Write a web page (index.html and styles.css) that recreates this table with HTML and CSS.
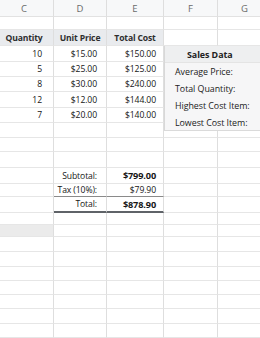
FILE: index.html
```html
<!DOCTYPE html>
<html>
<head>
<meta charset="utf-8">
<link rel="stylesheet" href="styles.css">
</head>
<body>
<div class="sheet">
  <div class="c hd">C</div><div class="c hd">D</div><div class="c hd">E</div><div class="c hd">F</div><div class="c hd">G</div>
  <div class="c"></div><div class="c"></div><div class="c"></div><div class="c"></div><div class="c"></div>
  <div class="c th">Quantity</div><div class="c th">Unit Price</div><div class="c th">Total Cost</div><div class="c"></div><div class="c"></div>

  <div class="panel">
    <div class="prow ptitle">Sales Data</div>
    <div class="prow">Average Price:</div>
    <div class="prow">Total Quantity:</div>
    <div class="prow">Highest Cost Item:</div>
    <div class="prow">Lowest Cost Item:</div>
  </div>

  <div class="c n pc">10</div><div class="c n pd">$15.00</div><div class="c n pe">$150.00</div>
  <div class="c n pc">5</div><div class="c n pd">$25.00</div><div class="c n pe">$125.00</div>
  <div class="c n pc">8</div><div class="c n pd">$30.00</div><div class="c n pe">$240.00</div>
  <div class="c n pc">12</div><div class="c n pd">$12.00</div><div class="c n pe">$144.00</div>
  <div class="c n pc">7</div><div class="c n pd">$20.00</div><div class="c n pe">$140.00</div>

  <div class="c"></div><div class="c"></div><div class="c"></div><div class="c"></div><div class="c"></div>
  <div class="c"></div><div class="c"></div><div class="c"></div><div class="c"></div><div class="c"></div>
  <div class="c"></div><div class="c"></div><div class="c"></div><div class="c"></div><div class="c"></div>

  <div class="c"></div><div class="c n pd low">Subtotal:</div><div class="c n pe b high">$799.00</div><div class="c"></div><div class="c"></div>
  <div class="c"></div><div class="c n pd pre">Tax (10%):</div><div class="c n pe pre">$79.90</div><div class="c"></div><div class="c"></div>
  <div class="c"></div><div class="c n pd tot">Total:</div><div class="c n pe b tot">$878.90</div><div class="c"></div><div class="c"></div>

  <div class="c"></div><div class="c"></div><div class="c"></div><div class="c"></div><div class="c"></div>
  <div class="c shade"></div><div class="c"></div><div class="c"></div><div class="c"></div><div class="c"></div>
  <div class="c"></div><div class="c"></div><div class="c"></div><div class="c"></div><div class="c"></div>
  <div class="c"></div><div class="c"></div><div class="c"></div><div class="c"></div><div class="c"></div>
  <div class="c"></div><div class="c"></div><div class="c"></div><div class="c"></div><div class="c"></div>
  <div class="c"></div><div class="c"></div><div class="c"></div><div class="c"></div><div class="c"></div>
  <div class="c"></div><div class="c"></div><div class="c"></div><div class="c"></div><div class="c"></div>
  <div class="c"></div><div class="c"></div><div class="c"></div><div class="c"></div><div class="c"></div>
  <div class="c"></div><div class="c"></div><div class="c"></div><div class="c"></div><div class="c"></div>
</div>
</body>
</html>
```
FILE: styles.css
```css
html, body {
  margin: 0;
  padding: 0;
  background: #ffffff;
  overflow: hidden;
}
body {
  width: 260px;
  height: 338px;
  font-family: "Open Sans", "Noto Sans", sans-serif;
  font-size: 8.6px;
  color: #161616;
}
.sheet {
  display: grid;
  margin-left: -5px;
  grid-template-columns: 59px 53px 57px 54px 54px;
  grid-template-rows: 17px 13px 16px 16px 15px 15px 16px 15px 15px 14px 16px 16px 13px 16px 12px 12px 15px 15px 14px 14px 14px 15px 14px;
}
.c {
  box-sizing: border-box;
  border-right: 1px solid #dedede;
  border-bottom: 1px solid #e6e6e6;
  display: flex;
  align-items: center;
  white-space: nowrap;
  overflow: hidden;
}
.hd {
  background: #f7f8f9;
  color: #6b6b6b;
  font-size: 9.5px;
  justify-content: center;
  border-bottom-color: #e2e2e2;
}
.th {
  background: #e9ebee;
  color: #2e2e2e;
  font-weight: 700;
  justify-content: center;
  letter-spacing: -0.15px;
}
.n {
  justify-content: flex-end;
  letter-spacing: -0.1px;
}
.pc { padding-right: 11px; }
.pd { padding-right: 9px; }
.pe { padding-right: 7px; }
.b { font-weight: 700; font-size: 9.2px; letter-spacing: -0.15px; }
.low { align-items: flex-end; padding-bottom: 1px; }
.high { align-items: flex-start; padding-top: 1px; }
.pre { border-bottom-color: #8a8a8a; }
.tot { border-bottom: 2px solid #5f6368; }
.shade { background: #ebebeb; }
.panel {
  grid-column: 4 / 6;
  grid-row: 4 / 9;
  align-self: start;
  height: 85px;
  position: relative;
  z-index: 1;
  background: #f6f6f7;
  border-left: 1px solid #d8d8d8;
  border-bottom: 1px solid #dadada;
  box-sizing: border-box;
  display: flex;
  flex-direction: column;
  font-size: 8.9px;
  color: #222222;
}
.prow {
  box-sizing: border-box;
  height: 17px;
  flex: none;
  display: flex;
  align-items: center;
  padding-left: 10px;
  letter-spacing: -0.05px;
}
.ptitle {
  background: #eeeff0;
  font-weight: 700;
  font-size: 8.9px;
  padding-left: 22px;
  border-bottom: 1px solid #e4e4e4;
}
```
